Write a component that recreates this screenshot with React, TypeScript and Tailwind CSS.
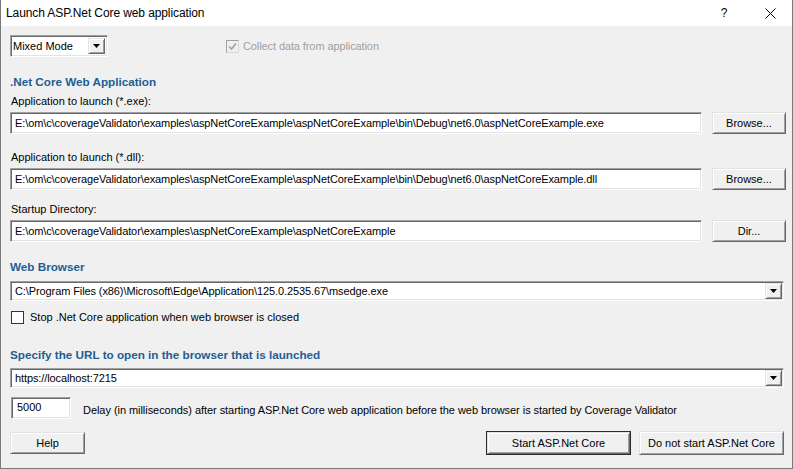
import React from 'react'

const sunken =
  'bg-white border border-t-[#a0a0a0] border-l-[#a0a0a0] border-r-white border-b-white shadow-[inset_1px_1px_0_#696969,inset_-1px_-1px_0_#e3e3e3]'
const raised =
  'bg-[#f0f0f0] border border-t-[#e3e3e3] border-l-[#e3e3e3] border-r-[#696969] border-b-[#696969] shadow-[inset_1px_1px_0_#ffffff,inset_-1px_-1px_0_#a0a0a0]'

function Arrow() {
  return (
    <div className={`${raised} w-[17px] h-full flex items-center justify-center shrink-0`}>
      <svg width="7" height="4" viewBox="0 0 7 4">
        <path d="M0 0h7L3.5 4z" fill="#000" />
      </svg>
    </div>
  )
}

function TextBox({ value }: { value: string }) {
  return (
    <div className={`${sunken} w-[692px] h-[22px] flex items-center pl-[4px] whitespace-nowrap overflow-hidden tracking-[-0.1px]`}>
      {value}
    </div>
  )
}

function Button({ label, className = '' }: { label: string; className?: string }) {
  return (
    <div className={`${raised} flex items-center justify-center ${className}`}>{label}</div>
  )
}

function Combo({ value }: { value: string }) {
  return (
    <div className={`${sunken} w-[774px] h-[20px] flex items-center`}>
      <div className="flex-1 pl-[4px] whitespace-nowrap tracking-[-0.1px]">{value}</div>
      <div className="h-full py-[1px] pr-[1px]">
        <Arrow />
      </div>
    </div>
  )
}

function Heading({ children, className = '' }: { children: React.ReactNode; className?: string }) {
  return <div className={`font-bold text-[#1e5e94] text-[11.7px] leading-[14px] ${className}`}>{children}</div>
}

export default function App() {
  return (
    <div className="w-[793px] h-[469px] bg-[#f0f0f0] border-x border-b border-[#7a7a7a] flex flex-col font-['Liberation_Sans',Arial,sans-serif] text-[11px] text-black leading-[14px]">
      {/* title bar */}
      <div className="h-[26px] bg-white flex items-center shrink-0">
        <div className="pl-[5px] text-[12px] flex-1 tracking-[-0.1px]">Launch ASP.Net Core web application</div>
        <div className="w-[30px] text-center text-[12px] mr-[16px]">?</div>
        <div className="w-[30px] flex items-center justify-center mr-[7px]">
          <svg width="11" height="11" viewBox="0 0 11 11">
            <path d="M0.5 0.5L10.5 10.5M10.5 0.5L0.5 10.5" stroke="#000" strokeWidth="1" />
          </svg>
        </div>
      </div>

      <div className="flex flex-col pl-[9px] pr-[5px]">
        {/* mode row */}
        <div className="mt-[9px] h-[22px] flex items-center">
          <div className={`${sunken} w-[98px] h-[22px] flex items-center`}>
            <div className="flex-1 pl-[2px]">Mixed Mode</div>
            <div className="h-full py-[2px] pr-[2px]">
              <Arrow />
            </div>
          </div>
          <div className="ml-[118px] flex items-center gap-[4px] text-[#a0a0a0]">
            <div className="w-[13px] h-[13px] border border-t-[#a0a0a0] border-l-[#a0a0a0] border-r-[#d8d8d8] border-b-[#d8d8d8] bg-[#f0f0f0] flex items-center justify-center">
              <svg width="9" height="9" viewBox="0 0 9 9">
                <path d="M1 4.5L3.5 7L8 1.5" stroke="#a0a0a0" strokeWidth="1.6" fill="none" />
              </svg>
            </div>
            <span className="tracking-[-0.1px]">Collect data from application</span>
          </div>
        </div>

        <Heading className="mt-[18px]">.Net Core Web Application</Heading>

        <div className="mt-[5px] pl-[1px]">Application to launch (*.exe):</div>
        <div className="mt-[4px] flex gap-[10px]">
          <TextBox value="E:\om\c\coverageValidator\examples\aspNetCoreExample\aspNetCoreExample\bin\Debug\net6.0\aspNetCoreExample.exe" />
          <Button label="Browse..." className="w-[74px] h-[22px]" />
        </div>

        <div className="mt-[16px] pl-[1px]">Application to launch (*.dll):</div>
        <div className="mt-[4px] flex gap-[10px]">
          <TextBox value="E:\om\c\coverageValidator\examples\aspNetCoreExample\aspNetCoreExample\bin\Debug\net6.0\aspNetCoreExample.dll" />
          <Button label="Browse..." className="w-[74px] h-[22px]" />
        </div>

        <div className="mt-[12px] pl-[1px]">Startup Directory:</div>
        <div className="mt-[4px] flex gap-[10px]">
          <TextBox value="E:\om\c\coverageValidator\examples\aspNetCoreExample\aspNetCoreExample" />
          <Button label="Dir..." className="w-[74px] h-[22px]" />
        </div>

        <Heading className="mt-[18px]">Web Browser</Heading>
        <div className="mt-[7px]">
          <Combo value="C:\Program Files (x86)\Microsoft\Edge\Application\125.0.2535.67\msedge.exe" />
        </div>

        <div className="mt-[9px] flex items-center gap-[6px] pl-[1px]">
          <div className="w-[13px] h-[13px] border border-[#333] bg-white" />
          <span>Stop .Net Core application when web browser is closed</span>
        </div>

        <Heading className="mt-[24px]">Specify the URL to open in the browser that is launched</Heading>
        <div className="mt-[6px]">
          <Combo value="https://localhost:7215" />
        </div>

        <div className="mt-[9px] flex items-center pl-[1px]">
          <div className={`${sunken} w-[60px] h-[22px] flex items-start pt-[2px] pl-[5px]`}>5000</div>
          <div className="ml-[12px] mt-[3px] tracking-[-0.05px]">
            Delay (in milliseconds) after starting ASP.Net Core web application before the web browser is started by Coverage Validator
          </div>
        </div>

        <div className="mt-[12px] flex items-center">
          <Button label="Help" className="w-[75px] h-[22px]" />
          <div className="flex-1" />
          <div className="w-[145px] h-[24px] border border-[#2b2b2b] flex">
            <Button label="Start ASP.Net Core" className="flex-1" />
          </div>
          <Button label="Do not start ASP.Net Core" className="ml-[8px] w-[145px] h-[24px]" />
          <div className="w-[3px]" />
        </div>
      </div>
    </div>
  )
}
